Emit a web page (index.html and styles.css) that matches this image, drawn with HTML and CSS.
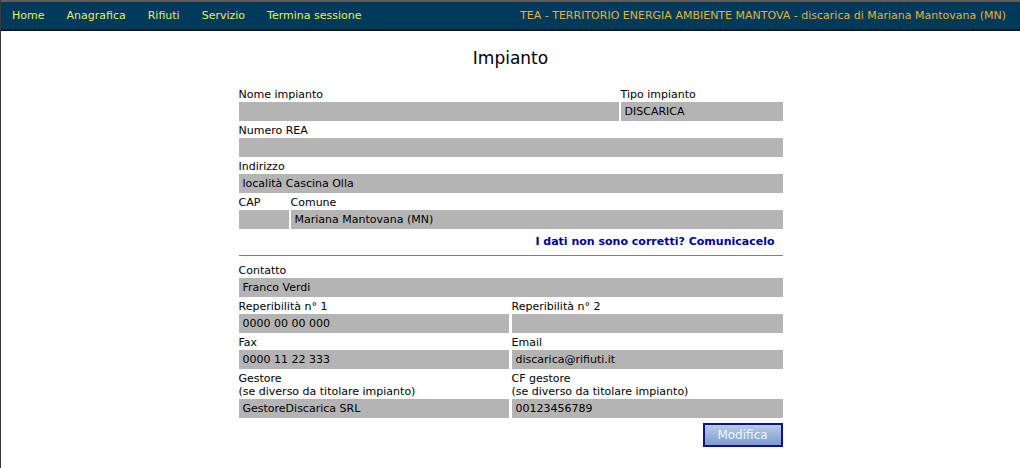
FILE: index.html
```html
<!DOCTYPE html>
<html lang="it">
<head>
<meta charset="utf-8">
<title>Impianto</title>
<link rel="stylesheet" href="styles.css">
</head>
<body>
<div class="topbar">
  <nav class="menu">
    <a href="#">Home</a>
    <a href="#">Anagrafica</a>
    <a href="#">Rifiuti</a>
    <a href="#">Servizio</a>
    <a href="#">Termina sessione</a>
  </nav>
  <div class="site">TEA - TERRITORIO ENERGIA AMBIENTE MANTOVA - discarica di Mariana Mantovana (MN)</div>
</div>
<main class="page">
  <h1 class="title">Impianto</h1>
  <form class="form">
    <div class="row cols-tipo">
      <div class="cell"><div class="label">Nome impianto</div><div class="field"></div></div>
      <div class="cell"><div class="label">Tipo impianto</div><div class="field">DISCARICA</div></div>
    </div>
    <div class="row">
      <div class="cell"><div class="label">Numero REA</div><div class="field"></div></div>
    </div>
    <div class="row">
      <div class="cell"><div class="label">Indirizzo</div><div class="field">località Cascina Olla</div></div>
    </div>
    <div class="row cols-cap">
      <div class="cell"><div class="label">CAP</div><div class="field"></div></div>
      <div class="cell"><div class="label">Comune</div><div class="field">Mariana Mantovana (MN)</div></div>
    </div>
    <div class="report"><a href="#">I dati non sono corretti? Comunicacelo</a></div>
    <hr class="sep">
    <div class="row">
      <div class="cell"><div class="label">Contatto</div><div class="field">Franco Verdi</div></div>
    </div>
    <div class="row cols-half">
      <div class="cell"><div class="label">Reperibilità n° 1</div><div class="field">0000 00 00 000</div></div>
      <div class="cell"><div class="label">Reperibilità n° 2</div><div class="field"></div></div>
    </div>
    <div class="row cols-half">
      <div class="cell"><div class="label">Fax</div><div class="field">0000 11 22 333</div></div>
      <div class="cell"><div class="label">Email</div><div class="field">discarica@rifiuti.it</div></div>
    </div>
    <div class="row cols-half">
      <div class="cell"><div class="label two">Gestore<br>(se diverso da titolare impianto)</div><div class="field">GestoreDiscarica SRL</div></div>
      <div class="cell"><div class="label two">CF gestore<br>(se diverso da titolare impianto)</div><div class="field">00123456789</div></div>
    </div>
    <div class="actions"><button type="button" class="btn">Modifica</button></div>
  </form>
</main>
</body>
</html>
```
FILE: styles.css
```css
html, body {
  margin: 0;
  padding: 0;
  background: #ffffff;
}
body {
  font-family: "DejaVu Sans", Verdana, sans-serif;
  font-size: 11px;
  color: #000;
  min-height: 468px;
  box-sizing: border-box;
  border-left: 1px solid #3a3a3a;
}
.topbar {
  display: flex;
  justify-content: space-between;
  align-items: center;
  height: 27px;
  background: #003a5a;
  border-top: 2px solid #5e5e5e;
  border-bottom: 2px solid #0b1a28;
  margin-left: -1px;
  padding: 0 14px 0 12px;
}
.menu {
  display: flex;
  gap: 22px;
}
.menu a {
  color: #e4f05a;
  text-decoration: none;
  font-size: 11px;
}
.site {
  color: #e2b43a;
  font-size: 11px;
}
.page {
  display: flex;
  flex-direction: column;
  align-items: center;
}
.title {
  font-size: 17px;
  font-weight: normal;
  margin: 16px 0 0 0;
  line-height: 22px;
}
.form {
  width: 544px;
  margin-top: 16px;
}
.row {
  display: grid;
  grid-template-columns: 1fr;
  column-gap: 2px;
}
.cols-tipo { grid-template-columns: 380px 162px; }
.cols-cap { grid-template-columns: 50px 1fr; }
.cols-half { grid-template-columns: 270px 1fr; column-gap: 3px; }
.label {
  padding-top: 3px;
  line-height: 14px;
}
.label.two {
  padding-top: 3px;
  line-height: 13px;
  padding-bottom: 1px;
}
.field {
  background: #b4b4b4;
  height: 19px;
  line-height: 19px;
  padding-left: 4px;
  white-space: nowrap;
}
.report {
  text-align: right;
  padding-right: 8px;
  margin-top: 6px;
  line-height: 14px;
}
.report a {
  color: #00009c;
  font-weight: bold;
  text-decoration: none;
}
.sep {
  border: 0;
  border-top: 1px solid #808080;
  margin: 6px 0 5px 0;
  height: 0;
}
.actions {
  display: flex;
  justify-content: flex-end;
  margin-top: 5px;
}
.btn {
  width: 80px;
  height: 24px;
  border: 2px solid #101090;
  background: linear-gradient(#b8cbe8, #7c9ccc);
  color: #f0f4ff;
  font-family: "DejaVu Sans", Tahoma, sans-serif;
  font-size: 12px;
  padding: 0;
}
```
